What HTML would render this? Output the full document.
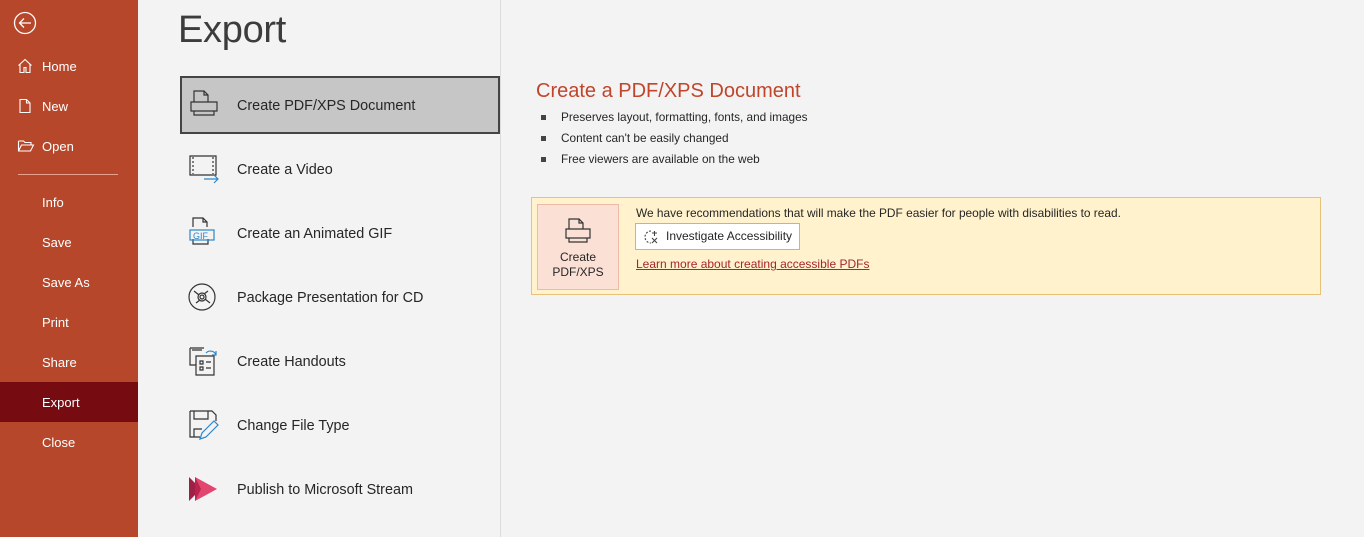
<!DOCTYPE html>
<html><head><meta charset="utf-8"><style>
*{margin:0;padding:0;box-sizing:border-box}
body{width:1364px;height:537px;overflow:hidden;background:#f3f3f3;font-family:"Liberation Sans",sans-serif;position:relative;color:#262626}
.side{position:absolute;left:0;top:0;width:138px;height:537px;background:#b7472a;color:#fff}
.side .it{position:absolute;left:0;width:138px;height:40px;font-size:13px;line-height:42px;padding-left:42px}
.side .ic{position:absolute;left:17px;top:12px}
.side .sel{background:#770b12}
.hr{position:absolute;left:18px;top:174px;width:100px;height:1px;background:#e8a08e}
h1{position:absolute;left:178px;top:9px;font-size:38px;font-weight:normal;color:#3c3c3c;letter-spacing:-0.3px}
.list{position:absolute;left:138px;top:0;width:363px;height:537px;border-right:1px solid #dcdcdc}
.opt{position:absolute;left:42px;width:320px;height:58px;font-size:14.4px;line-height:60px;padding-left:57px;color:#262626}
.opt svg{position:absolute;left:8px;top:13px}
.opt.on{background:#c6c6c6;border:2px solid #444;left:42px;top:76px;height:58px;line-height:56px;padding-left:55px}
.opt.on svg{left:7px;top:11px}
.rt h2{position:absolute;left:536px;top:80px;font-size:20px;font-weight:normal;color:#c0452b}
.bul{position:absolute;left:542px;font-size:11.8px;color:#262626}
.bul:before{content:"";position:absolute;left:-1px;top:5px;width:5px;height:5px;background:#444}
.bul span{margin-left:19px}
.box{position:absolute;left:531px;top:197px;width:790px;height:98px;background:#fff2cc;border:1px solid #e9c27a}
.btn{position:absolute;left:5px;top:6px;width:82px;height:86px;background:#fbe0d6;border:1px solid #f0b8a6;font-size:12px;text-align:center;color:#262626;line-height:15px}
.btn .t{position:absolute;top:45px;left:0;width:80px}
.msg{position:absolute;left:104px;top:8px;font-size:11.9px;color:#262626}
.ia{position:absolute;left:103px;top:25px;width:165px;height:27px;background:#fff;border:1px solid #b5b5b5;font-size:12px;line-height:25px;padding-left:30px}
.lk{position:absolute;left:104px;top:59px;font-size:12px;color:#a4262c;text-decoration:underline}
</style></head><body>
<div class="side">
 <svg style="position:absolute;left:13px;top:11px" width="24" height="24" viewBox="0 0 24 24" fill="none" stroke="#fff" stroke-width="1.3"><circle cx="12" cy="12" r="10.5"/><path d="M6.5 12H18M11 7.5L6.5 12 11 16.5"/></svg>
 <div class="it" style="top:46px"><svg class="ic" width="16" height="16" viewBox="0 0 16 16" fill="none" stroke="#fff" stroke-width="1.1"><path d="M1.5 7.5L8 1.5l6.5 6M3 6v8.5h4v-5h2v5h4V6"/></svg>Home</div>
 <div class="it" style="top:86px"><svg class="ic" width="16" height="16" viewBox="0 0 16 16" fill="none" stroke="#fff" stroke-width="1.1"><path d="M3 1.5h6.5L13 5v9.5H3zM9.5 1.5V5H13"/></svg>New</div>
 <div class="it" style="top:126px"><svg class="ic" width="18" height="16" viewBox="0 0 18 16" fill="none" stroke="#fff" stroke-width="1.1"><path d="M1.5 3h5l1.5 1.5h6V7M1.5 3v10h12l3-6H4.5l-3 6"/></svg>Open</div>
 <div class="hr"></div>
 <div class="it" style="top:182px">Info</div>
 <div class="it" style="top:222px">Save</div>
 <div class="it" style="top:262px">Save As</div>
 <div class="it" style="top:302px">Print</div>
 <div class="it" style="top:342px">Share</div>
 <div class="it sel" style="top:382px">Export</div>
 <div class="it" style="top:422px">Close</div>
</div>
<h1>Export</h1>
<div class="list">
 <div class="opt on"><svg width="30" height="32" viewBox="0 0 30 32" fill="none" stroke="#333" stroke-width="1.2"><path d="M5 13V2h10l4 4v7M15 2v4h4M2 13h26v9H2zM5 22v4h20v-4M5 26h20"/></svg>Create PDF/XPS Document</div>
 <div class="opt" style="top:140px"><svg width="32" height="32" viewBox="0 0 32 32" fill="none" stroke="#333" stroke-width="1.2"><path d="M2 3h26v19H2z"/><path d="M5 4v17M25 4v17" stroke-dasharray="2 2"/><path d="M16 26h14M26 22l4 4-4 4" stroke="#2e86c9"/></svg>Create a Video</div>
 <div class="opt" style="top:204px"><svg width="30" height="32" viewBox="0 0 30 32" fill="none" stroke="#333" stroke-width="1.2"><path d="M5 10V1h10l4 4v5M15 1v4h4M5 22v5h15v-5"/><rect x="2" y="13" width="24" height="10" stroke="#2e86c9"/><text x="5" y="22" font-size="9" fill="#2e86c9" stroke="none" font-family="Liberation Sans">GIF</text></svg>Create an Animated GIF</div>
 <div class="opt" style="top:268px"><svg width="30" height="32" viewBox="0 0 30 32" fill="none" stroke="#333" stroke-width="1.2"><circle cx="14" cy="16" r="13"/><circle cx="14" cy="16" r="4"/><circle cx="14" cy="16" r="2"/><path d="M6 10l5 4M17 18l5 4M8 22l4-3M20 10l-4 3"/></svg>Package Presentation for CD</div>
 <div class="opt" style="top:332px"><svg width="30" height="32" viewBox="0 0 30 32" fill="none" stroke="#333" stroke-width="1.2"><path d="M2 3h14M2 3v17h6M4 5h10"/><path d="M8 11h18v19H8z"/><path d="M12 16h3v3h-3zM12 22h3v3h-3zM18 17h5M18 23h5"/><path d="M18 8a6 6 0 0 1 10 2M28 6v4h-4" stroke="#2e86c9"/></svg>Create Handouts</div>
 <div class="opt" style="top:396px"><svg width="32" height="32" viewBox="0 0 32 32" fill="none" stroke="#333" stroke-width="1.2"><path d="M2 2h22l4 4v6M2 2v26h10M6 2v8h14V2M6 28v-8h8"/><path d="M12 30l2-6L26 12l4 4-12 12z" stroke="#2e86c9"/></svg>Change File Type</div>
 <div class="opt" style="top:460px"><svg width="30" height="32" viewBox="0 0 30 32"><path d="M1 4l12 12L1 28z" fill="#a01f45"/><path d="M7 4l22 12L7 28z" fill="#e0325f" opacity=".9"/><path d="M7 4l6 12-6 12z" fill="#b8234f"/></svg>Publish to Microsoft Stream</div>
</div>
<div class="rt">
 <h2>Create a PDF/XPS Document</h2>
 <div class="bul" style="top:110px"><span>Preserves layout, formatting, fonts, and images</span></div>
 <div class="bul" style="top:131px"><span>Content can't be easily changed</span></div>
 <div class="bul" style="top:152px"><span>Free viewers are available on the web</span></div>
 <div class="box">
  <div class="btn"><svg style="position:absolute;left:26px;top:12px" width="30" height="30" viewBox="0 0 30 30" fill="none" stroke="#333" stroke-width="1.2"><path d="M5 12V2h10l4 4v6M15 2v4h4M2 12h24v9H2zM5 21v4h18v-4M5 25h18"/></svg><div class="t">Create<br>PDF/XPS</div></div>
  <div class="msg">We have recommendations that will make the PDF easier for people with disabilities to read.</div>
  <div class="ia"><svg style="position:absolute;left:8px;top:5px" width="16" height="16" viewBox="0 0 16 16" fill="none" stroke="#444" stroke-width="1.1"><path d="M7 2a6 6 0 1 0 0 12" stroke-dasharray="2 1.5"/><path d="M8 4h5M10.5 2v5M8 9l5 5M13 9l-5 5"/></svg>Investigate Accessibility</div>
  <div class="lk">Learn more about creating accessible PDFs</div>
 </div>
</div>
</body></html>
